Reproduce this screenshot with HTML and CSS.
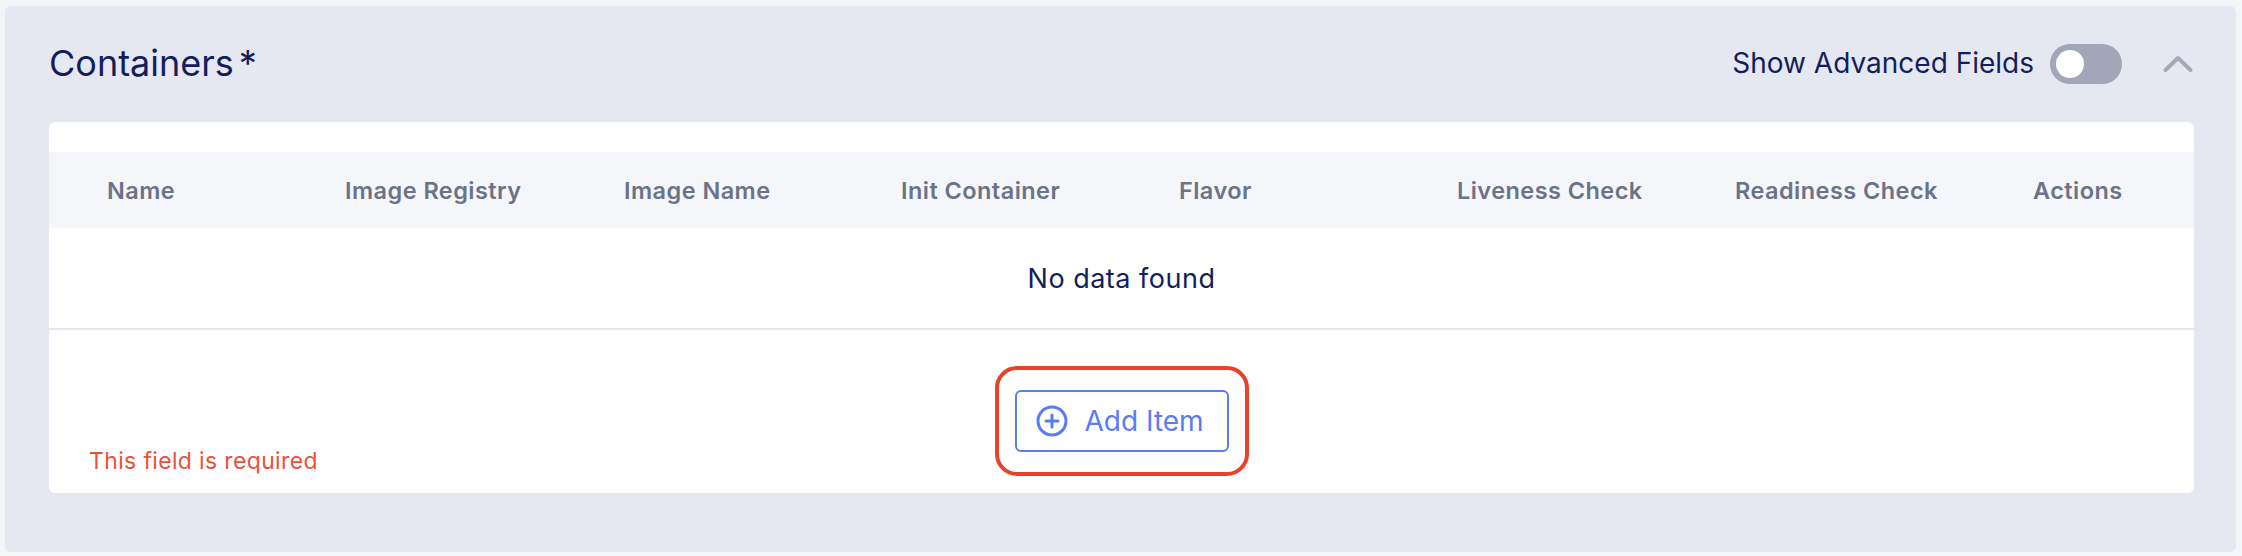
FILE: index.html
```html
<!DOCTYPE html>
<html lang="en">
<head>
<meta charset="utf-8">
<title>Containers</title>
<link rel="stylesheet" href="styles.css">
</head>
<body>
<section class="panel">
  <header class="panel-head">
    <h2 class="panel-title">Containers<span class="req">*</span></h2>
    <div class="panel-tools">
      <span class="adv-label">Show Advanced Fields</span>
      <span class="toggle"><span class="knob"></span></span>
      <svg class="chevron" width="32" height="20" viewBox="0 0 32 20" aria-hidden="true">
        <path d="M3.5 16 L16 4 L28.5 16" fill="none" stroke="#a3a9b8" stroke-width="4" stroke-linecap="round" stroke-linejoin="round"/>
      </svg>
    </div>
  </header>
  <div class="card">
    <div class="thead">
      <span>Name</span>
      <span>Image Registry</span>
      <span>Image Name</span>
      <span>Init Container</span>
      <span>Flavor</span>
      <span>Liveness Check</span>
      <span>Readiness Check</span>
      <span>Actions</span>
    </div>
    <div class="empty-row">No data found</div>
    <div class="card-foot">
      <span class="error">This field is required</span>
      <div class="highlight">
        <button class="add-btn" type="button">
          <svg width="32" height="32" viewBox="0 0 32 32" aria-hidden="true">
            <circle cx="16" cy="16" r="14" fill="none" stroke="#5a7cf2" stroke-width="3"/>
            <path d="M16 10 V22 M10 16 H22" stroke="#5a7cf2" stroke-width="3" stroke-linecap="round"/>
          </svg>
          <span>Add Item</span>
        </button>
      </div>
      <span></span>
    </div>
  </div>
</section>
</body>
</html>
```
FILE: styles.css
```css
* { box-sizing: border-box; }

html, body {
  margin: 0;
  background: #f5f6f8;
}

body {
  padding: 6px 6px 4px 5px;
  font-family: Inter, "Noto Sans", sans-serif;
  color: #141e5a;
}

.panel {
  background: #e5e8f1;
  border-radius: 6px;
  height: 546px;
  padding: 0 42px 0 44px;
  display: flex;
  flex-direction: column;
}

.panel-head {
  height: 116px;
  display: flex;
  align-items: center;
  justify-content: space-between;
}

.panel-title {
  margin: 0;
  font-size: 36px;
  font-weight: 400;
  line-height: 1.21;
  color: #141e5a;
}

.req { margin-left: 5px; }

.panel-tools {
  display: flex;
  align-items: center;
}

.adv-label {
  font-size: 28px;
  line-height: 1.21;
  color: #141e5a;
  margin-right: 16px;
}

.toggle {
  width: 72px;
  height: 40px;
  border-radius: 20px;
  background: #a1a7b6;
  display: flex;
  align-items: center;
  padding-left: 6px;
}

.knob {
  width: 28px;
  height: 28px;
  border-radius: 50%;
  background: #ffffff;
}

.chevron {
  margin-left: 40px;
  display: block;
}

.card {
  background: #ffffff;
  border-radius: 6px;
  padding-top: 30px;
  height: 371px;
  display: flex;
  flex-direction: column;
}

.thead {
  height: 76px;
  background: #f5f6f9;
  display: grid;
  grid-template-columns: 238px 279px 277px 278px 278px 278px 298px 1fr;
  align-items: center;
  padding-left: 58px;
  font-size: 23.5px;
  letter-spacing: 0.45px;
  font-weight: 600;
  color: #6a7387;
}

.empty-row {
  height: 102px;
  border-bottom: 2px solid #e5e8f1;
  display: flex;
  align-items: center;
  justify-content: center;
  font-size: 27px;
  letter-spacing: 0.5px;
  color: #141e5a;
}

.card-foot {
  flex: 1;
  display: grid;
  grid-template-columns: 1fr auto 1fr;
  align-items: end;
  padding: 36px 40px 17px;
}

.error {
  font-size: 23px;
  letter-spacing: 0.35px;
  line-height: 30px;
  color: #e8523a;
}

.highlight {
  border: 4px solid #e9412a;
  border-radius: 22px;
  padding: 20px 16px;
}

.add-btn {
  display: flex;
  align-items: center;
  gap: 17px;
  height: 62px;
  width: 214px;
  padding: 0 0 0 19px;
  background: #ffffff;
  border: 2px solid #5a7cf2;
  border-radius: 6px;
  font-family: Inter, "Noto Sans", sans-serif;
  font-size: 28px;
  color: #5a7cf2;
  cursor: pointer;
}

.add-btn svg { display: block; flex: none; }
```
